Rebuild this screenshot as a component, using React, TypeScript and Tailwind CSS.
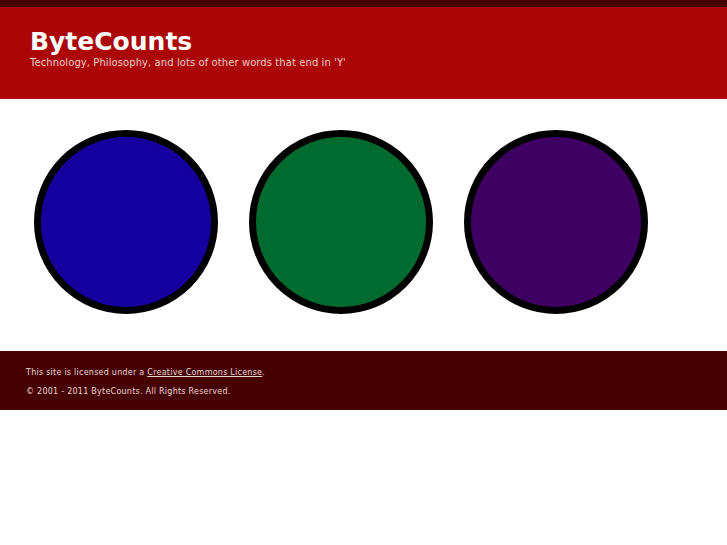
export default function App() {
  const circles = ['bg-[#15009f]', 'bg-[#006b2f]', 'bg-[#3e0061]']

  return (
    <div className="min-h-screen bg-white" style={{ fontFamily: '"DejaVu Sans", sans-serif' }}>
      <div className="h-[7px] bg-[#450000]" />
      <header className="h-[92px] bg-[#ac0505] px-[30px] pt-[20px]">
        <h1 className="text-[25px] font-bold leading-[29px] text-white">ByteCounts</h1>
        <p className="text-[10px] leading-[14px] tracking-[0.08px] text-[#ecc9c9]">
          Technology, Philosophy, and lots of other words that end in 'Y'
        </p>
      </header>
      <main className="flex h-[252px] gap-[31px] pl-[34px] pt-[31px]">
        {circles.map((c) => (
          <div key={c} className={`h-[184px] w-[184px] rounded-full border-[7px] border-black ${c}`} />
        ))}
      </main>
      <footer className="h-[59px] bg-[#470000] px-[26px] pt-[16px] text-[8px] leading-[11px] tracking-[0.25px] text-[#e8d6d6]">
        <p>
          This site is licensed under a{' '}
          <a href="#" className="underline">
            Creative Commons License
          </a>
          .
        </p>
        <p className="mt-[8px]">© 2001 - 2011 ByteCounts. All Rights Reserved.</p>
      </footer>
    </div>
  )
}
